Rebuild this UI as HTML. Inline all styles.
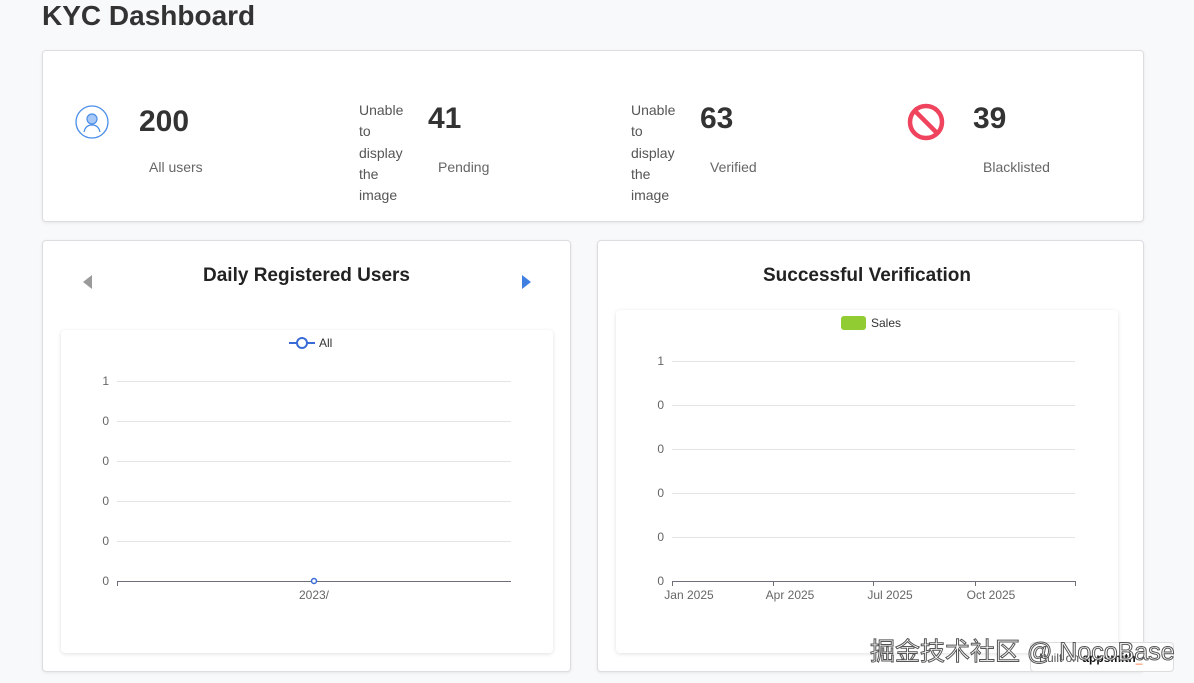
<!DOCTYPE html>
<html><head><meta charset="utf-8">
<style>
*{margin:0;padding:0;box-sizing:border-box}
body{width:1194px;height:683px;background:#f8f9fb;font-family:"Liberation Sans","Noto Sans CJK SC",sans-serif;position:relative;overflow:hidden;color:#333}
.a{position:absolute}
.card{position:absolute;background:#fff;border:1px solid #dcdde0;border-radius:4px;box-shadow:0 1px 3px rgba(0,0,0,.08)}
.inner{position:absolute;background:#fff;border-radius:4px;box-shadow:0 1px 4px rgba(0,0,0,.12)}
.num{position:absolute;font-size:30px;font-weight:bold;color:#333}
.lbl{position:absolute;font-size:14px;color:#666}
.un{position:absolute;font-size:14px;color:#555;line-height:21.3px;width:50px}
.h{position:absolute;font-size:19px;font-weight:bold;color:#222;text-align:center}
.g{position:absolute;height:1px;background:#e4e4e4}
.yl{position:absolute;font-size:12px;color:#666;text-align:right;width:20px}
.xl{position:absolute;font-size:12px;color:#666;text-align:center;width:70px}
</style></head><body>
<div class="a" style="left:42px;top:0;font-size:28px;font-weight:bold;color:#333">KYC Dashboard</div>

<div class="card" style="left:42px;top:50px;width:1102px;height:172px"></div>
<svg class="a" style="left:74px;top:104px" width="36" height="36" viewBox="0 0 36 36"><circle cx="18" cy="18" r="16" fill="none" stroke="#4a8ee8" stroke-width="1.3"/><circle cx="18" cy="15" r="5" fill="#a9c8f5" stroke="#4a8ee8" stroke-width="1.2"/><path d="M10 28c1-5 4-7 8-7s7 2 8 7" fill="none" stroke="#4a8ee8" stroke-width="1.3"/></svg>
<div class="num" style="left:139px;top:105px">200</div>
<div class="lbl" style="left:149px;top:159px">All users</div>
<div class="un" style="left:359px;top:100px">Unable to display the image</div>
<div class="num" style="left:428px;top:102px">41</div>
<div class="lbl" style="left:438px;top:159px">Pending</div>
<div class="un" style="left:631px;top:100px">Unable to display the image</div>
<div class="num" style="left:700px;top:102px">63</div>
<div class="lbl" style="left:710px;top:159px">Verified</div>
<svg class="a" style="left:906px;top:102px" width="40" height="40" viewBox="0 0 40 40"><circle cx="20" cy="20" r="16" fill="none" stroke="#f0445e" stroke-width="4.5"/><path d="M9 9L31 31" stroke="#f0445e" stroke-width="4.5"/></svg>
<div class="num" style="left:973px;top:102px">39</div>
<div class="lbl" style="left:983px;top:159px">Blacklisted</div>

<div class="card" style="left:42px;top:240px;width:529px;height:432px"></div>
<svg class="a" style="left:83px;top:275px" width="10" height="14"><path d="M9 0V14L0 7Z" fill="#9a9a9a"/></svg>
<svg class="a" style="left:522px;top:275px" width="10" height="14"><path d="M0 0V14L9 7Z" fill="#3f7fe0"/></svg>
<div class="h" style="left:42px;top:265px;width:529px">Daily Registered Users</div>
<div class="inner" style="left:61px;top:330px;width:492px;height:323px"></div>
<svg class="a" style="left:288px;top:336px" width="28" height="14"><path d="M1 7H27" stroke="#3a6bd6" stroke-width="2"/><circle cx="14" cy="7" r="5" fill="#fff" stroke="#3a6bd6" stroke-width="2"/></svg>
<div class="a" style="left:319px;top:336px;font-size:12px;color:#333">All</div>
<div class="g" style="left:117px;top:381px;width:394px"></div>
<div class="g" style="left:117px;top:421px;width:394px"></div>
<div class="g" style="left:117px;top:461px;width:394px"></div>
<div class="g" style="left:117px;top:501px;width:394px"></div>
<div class="g" style="left:117px;top:541px;width:394px"></div>
<div class="g" style="left:117px;top:581px;width:394px;background:#6e7079"></div>
<div class="a" style="left:117px;top:581px;width:1px;height:5px;background:#6e7079"></div>
<div class="yl" style="left:89px;top:374px">1</div>
<div class="yl" style="left:89px;top:414px">0</div>
<div class="yl" style="left:89px;top:454px">0</div>
<div class="yl" style="left:89px;top:494px">0</div>
<div class="yl" style="left:89px;top:534px">0</div>
<div class="yl" style="left:89px;top:574px">0</div>
<svg class="a" style="left:310px;top:577px" width="8" height="8"><circle cx="4" cy="4" r="2.5" fill="#fff" stroke="#3a6bd6" stroke-width="1.5"/></svg>
<div class="xl" style="left:279px;top:588px">2023/</div>

<div class="card" style="left:597px;top:240px;width:547px;height:432px"></div>
<div class="h" style="left:597px;top:265px;width:540px">Successful Verification</div>
<div class="inner" style="left:616px;top:310px;width:502px;height:343px"></div>
<div class="a" style="left:841px;top:316px;width:25px;height:14px;background:#91cc33;border-radius:3px"></div>
<div class="a" style="left:871px;top:316px;font-size:12px;color:#333">Sales</div>
<div class="g" style="left:672px;top:361px;width:403px"></div>
<div class="g" style="left:672px;top:405px;width:403px"></div>
<div class="g" style="left:672px;top:449px;width:403px"></div>
<div class="g" style="left:672px;top:493px;width:403px"></div>
<div class="g" style="left:672px;top:537px;width:403px"></div>
<div class="g" style="left:672px;top:581px;width:403px;background:#6e7079"></div>
<div class="a" style="left:672px;top:581px;width:1px;height:5px;background:#6e7079"></div>
<div class="a" style="left:773px;top:581px;width:1px;height:5px;background:#6e7079"></div>
<div class="a" style="left:873px;top:581px;width:1px;height:5px;background:#6e7079"></div>
<div class="a" style="left:975px;top:581px;width:1px;height:5px;background:#6e7079"></div>
<div class="a" style="left:1075px;top:581px;width:1px;height:5px;background:#6e7079"></div>
<div class="yl" style="left:644px;top:354px">1</div>
<div class="yl" style="left:644px;top:398px">0</div>
<div class="yl" style="left:644px;top:442px">0</div>
<div class="yl" style="left:644px;top:486px">0</div>
<div class="yl" style="left:644px;top:530px">0</div>
<div class="yl" style="left:644px;top:574px">0</div>
<div class="xl" style="left:654px;top:588px">Jan 2025</div>
<div class="xl" style="left:755px;top:588px">Apr 2025</div>
<div class="xl" style="left:855px;top:588px">Jul 2025</div>
<div class="xl" style="left:956px;top:588px">Oct 2025</div>

<div class="a" style="left:1030px;top:642px;width:144px;height:30px;background:#fff;border:1px solid #ddd;border-radius:4px;font-size:12px;color:#555;padding:8px 0 0 8px">Built on <b style="color:#111">appsmith</b><span style="color:#f86a2b">_</span></div>
<div class="a" style="left:870px;top:632px;font-size:25px;color:#fff;-webkit-text-stroke:1px #555;white-space:nowrap">掘金技术社区 @ NocoBase</div>
</body></html>
